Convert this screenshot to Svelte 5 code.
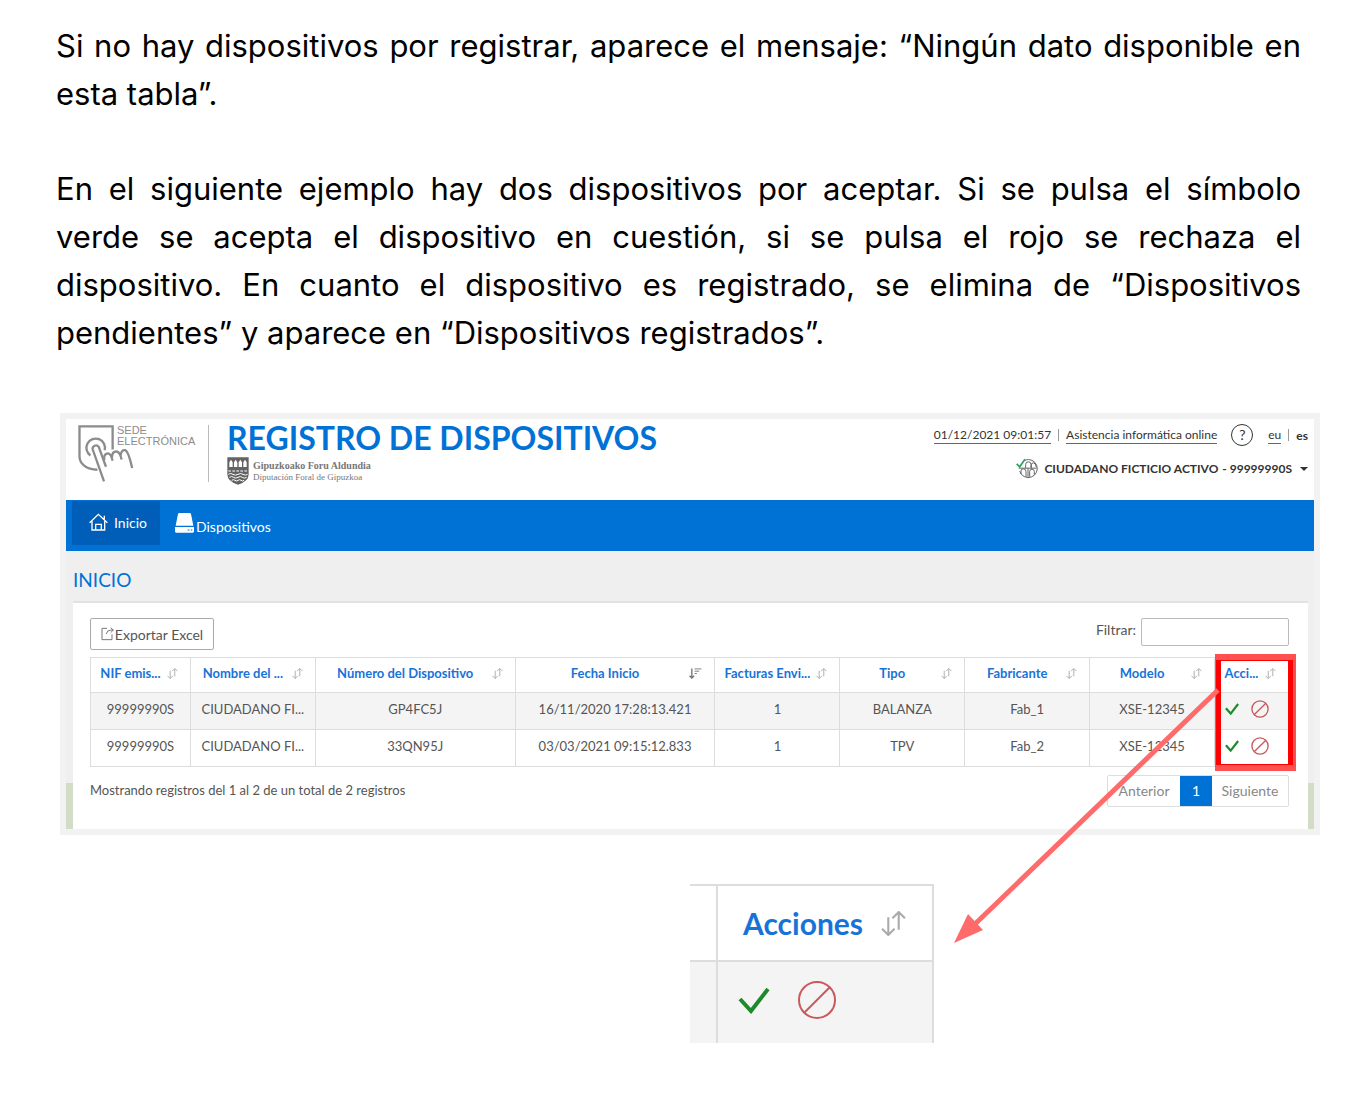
<script lang="ts">
    type Column = { label: string; width: number; sorted?: boolean };

    // Column widths are relative, they become percentages in the colgroup
    const columns: Column[] = [
        { label: 'NIF emis...', width: 100 },
        { label: 'Nombre del ...', width: 125 },
        { label: 'Número del Dispositivo', width: 200 },
        { label: 'Fecha Inicio', width: 200, sorted: true },
        { label: 'Facturas Envi...', width: 125 },
        { label: 'Tipo', width: 125 },
        { label: 'Fabricante', width: 125 },
        { label: 'Modelo', width: 125 },
        { label: 'Acci...', width: 74 }
    ];

    const total = columns.reduce((sum, column) => sum + column.width, 0);

    const devices = [
        ['99999990S', 'CIUDADANO FI...', 'GP4FC5J', '16/11/2020 17:28:13.421', '1', 'BALANZA', 'Fab_1', 'XSE-12345'],
        ['99999990S', 'CIUDADANO FI...', '33QN95J', '03/03/2021 09:15:12.833', '1', 'TPV', 'Fab_2', 'XSE-12345']
    ];

    let filter = $state('');

    const visible = $derived(
        devices.filter((row) => row.join(' ').toLowerCase().includes(filter.toLowerCase()))
    );
</script>

{#snippet sortIcon()}
    <svg class="sort" viewBox="0 0 24 24" aria-hidden="true">
        <path d="M7 6v17M1 17l6 6 6-6M17 18V2M11 7l6-6 6 6" />
    </svg>
{/snippet}

{#snippet sortedIcon()}
    <svg class="sort sorted" viewBox="0 0 28 24" aria-hidden="true">
        <path d="M6 1v21M1 17l5 5 5-5" stroke-width="3" />
        <path d="M12 2h15M12 7h10M12 12h5" />
    </svg>
{/snippet}

{#snippet actions()}
    <div class="actions">
        <button type="button" aria-label="Aceptar">
            <svg class="check" viewBox="0 0 32 27" aria-hidden="true"><path d="M2 12l11 12L30 2" /></svg>
        </button>
        <button type="button" aria-label="Rechazar">
            <svg class="ban" viewBox="0 0 40 40" aria-hidden="true">
                <circle cx="20" cy="20" r="18" />
                <path d="M7 33L33 7" />
            </svg>
        </button>
    </div>
{/snippet}

<main>
    <p>Si no hay dispositivos por registrar, aparece el mensaje: “Ningún dato disponible en esta tabla”.</p>
    <p>
        En el siguiente ejemplo hay dos dispositivos por aceptar. Si se pulsa el símbolo
        verde&nbsp;se&nbsp;acepta el dispositivo en cuestión, si se pulsa el rojo se rechaza el dispositivo. En
        cuanto el dispositivo es registrado, se elimina de “Dispositivos pendientes” y aparece en “Dispositivos
        registrados”.
    </p>

    <section class="screen">
        <header>
            <div class="sede">
                <svg class="hand" viewBox="0 0 168 172" aria-hidden="true">
                    <path d="M58 135C24 135 4 116 4 94V4H104V74" />
                    <path d="M37 92A28 28 0 1 1 80 76" />
                    <path d="M78 170L44 74A10 10 0 0 1 62 66L84 126" />
                    <path d="M79 106Q76 88 88 86Q98 84 104 108M102 98Q102 80 115 80Q126 80 131 104M128 92Q130 74 142 76Q152 80 163 130" />
                </svg>
                <div class="sede-name">
                    <span>SEDE</span>
                    <span>ELECTRÓNICA</span>
                </div>
            </div>
            <div class="brand">
                <h1>REGISTRO DE DISPOSITIVOS</h1>
                <div class="council">
                    <svg viewBox="0 0 66 84" aria-hidden="true">
                        <path d="M1 1H65V52Q65 74 33 83Q1 74 1 52Z" fill="#636363" />
                        <path d="M7 30V16l5-8 5 8v14zM21 30V16l5-8 5 8v14zM35 30V16l5-8 5 8v14zM49 30V16l5-8 5 8v14z" fill="#fff" />
                        <path d="M4 42H62" stroke="#fff" stroke-width="3" stroke-dasharray="8 4" />
                        <path d="M4 52q7-5 14 0t15 0t15 0t14 0M7 61q7-5 13 0t13 0t13 0t13 0M14 70q6-4 10 0t9 0t9 0t9 0" fill="none" stroke="#fff" stroke-width="3" />
                    </svg>
                    <div><b>Gipuzkoako Foru Aldundia</b><br />Diputación Foral de Gipuzkoa</div>
                </div>
            </div>
            <div class="session">
                <div class="links">
                    <a href="#hora">01/12/2021 09:01:57</a>
                    <i></i>
                    <a href="#asistencia">Asistencia informática online</a>
                    <a class="help" href="#ayuda" aria-label="Ayuda">?</a>
                    <a href="#eu">eu</a>
                    <i></i>
                    <b>es</b>
                </div>
                <button class="user" type="button">
                    <svg viewBox="0 0 66 62" aria-hidden="true">
                        <g fill="none" stroke="#666" stroke-width="3">
                            <path d="M27 6A27 27 0 1 1 11 39M8 30H62M36 30V60" />
                            <path d="M29 30V19q0-8 8-8t8 8v11M46 30V20q0-6 6-6 7 0 9 13M15 48V38q0-6 7-6t8 8v16M41 56V40q0-7 7-7t7 7v10" />
                        </g>
                        <path d="M2 17l9 9L27 3" fill="none" stroke="#2fa35c" stroke-width="5" />
                    </svg>
                    <span>CIUDADANO FICTICIO ACTIVO</span>
                    <span>- 99999990S</span>
                    <em></em>
                </button>
            </div>
        </header>

        <nav>
            <a class="active" href="#inicio">
                <svg width="19" height="18" viewBox="0 0 57 54" aria-hidden="true">
                    <path d="M2 29L28 4l27 25M9 25v26h38V25M20 51V34h17v17M46 19V8" fill="none" stroke="#fff" stroke-width="4" />
                </svg>
                Inicio
            </a>
            <a class="devices" href="#dispositivos">
                <svg width="19" height="20" viewBox="0 0 57 60" aria-hidden="true">
                    <path d="M9 3Q10 0 13 0H44Q47 0 48 3L55 38H2Z" fill="#fff" />
                    <path d="M0 42H57V55Q57 59 53 59H4Q0 59 0 55Z" fill="#fff" />
                    <path d="M38 51h5M47 51h5" stroke="#0072d6" stroke-width="3" />
                </svg>
                Dispositivos
            </a>
        </nav>

        <div class="content">
            <h2>INICIO</h2>
            <div class="card">
                <div class="toolbar">
                    <button class="export" type="button">
                        <svg width="14" height="14" viewBox="0 0 42 42" aria-hidden="true">
                            <path d="M18 4H3V38H33V22M16 21Q18 9 30 9H37M29 2l8 7-8 8" fill="none" stroke="#777" stroke-width="3" />
                        </svg>Exportar Excel
                    </button>
                    <div class="search">
                        <label for="filter">Filtrar:</label>
                        <input id="filter" type="text" bind:value={filter} />
                    </div>
                </div>

                <div class="table-wrap">
                    <table>
                        <colgroup>
                            {#each columns as column}
                                <col style="width: {(column.width / total) * 100}%" />
                            {/each}
                        </colgroup>
                        <thead>
                            <tr>
                                {#each columns as column}
                                    <th>
                                        {column.label}
                                        {#if column.sorted}
                                            {@render sortedIcon()}
                                        {:else}
                                            {@render sortIcon()}
                                        {/if}
                                    </th>
                                {/each}
                            </tr>
                        </thead>
                        <tbody>
                            {#each visible as row}
                                <tr>
                                    {#each row as cell}
                                        <td>{cell}</td>
                                    {/each}
                                    <td>{@render actions()}</td>
                                </tr>
                            {/each}
                        </tbody>
                    </table>
                    <div class="highlight"></div>
                    <svg class="arrow" width="266" height="288" viewBox="0 0 266 288" aria-hidden="true">
                        <path d="M264 33L20 268" stroke="#ff6b6b" stroke-width="5" />
                        <path d="M0 286L14 257L29 273Z" fill="#ff6b6b" />
                    </svg>
                </div>

                <div class="footer">
                    <span>Mostrando registros del 1 al 2 de un total de 2 registros</span>
                    <div class="pages">
                        <button type="button">Anterior</button>
                        <button class="current" type="button">1</button>
                        <button type="button">Siguiente</button>
                    </div>
                </div>
            </div>
        </div>
    </section>

    <table class="detail">
        <thead>
            <tr>
                <td></td>
                <th>Acciones {@render sortIcon()}</th>
            </tr>
        </thead>
        <tbody>
            <tr>
                <td></td>
                <td>{@render actions()}</td>
            </tr>
        </tbody>
    </table>
</main>

<style>
    :global(body) {
        margin: 0;
        background: #fff;
    }

    main {
        padding: 22px 0 50px;
        font-family: Lato, sans-serif;
        font-size: 14px;
        color: #555;
    }

    p {
        margin: 0 62px 47px 56px;
        font-family: Inter, sans-serif;
        font-size: 31px;
        line-height: 48px;
        text-align: justify;
        color: #000;
    }

    a {
        color: inherit;
        text-decoration: none;
    }

    button {
        font: inherit;
        color: inherit;
        padding: 0;
        border: 0;
        background: none;
        cursor: pointer;
    }

    .screen {
        margin: 56px 43px 0 60px;
        border: 6px solid #f2f2f2;
        background: #fff;
    }

    header {
        display: flex;
        height: 81px;
        box-sizing: border-box;
        padding: 0 6px 0 12px;
    }

    .sede {
        display: flex;
        height: 57px;
        width: 130px;
        margin-top: 6px;
        border-right: 1px solid #bbb;
        font: 500 11px/11px "Liberation Sans", sans-serif;
        color: #8c8c8c;
    }

    .sede-name {
        display: flex;
        flex-direction: column;
        margin-left: -17px;
    }

    .hand {
        width: 56px;
        height: 57px;
        flex: none;
    }

    .hand path {
        fill: none;
        stroke: #8c8c8c;
        stroke-width: 7;
    }

    .brand {
        margin-left: 18px;
    }

    h1 {
        margin: 0;
        font-size: 32px;
        line-height: 38px;
        color: #0072d6;
        white-space: nowrap;
    }

    .council {
        display: flex;
        gap: 4px;
        font: 9px/11px "Liberation Serif", serif;
        color: #777;
        white-space: nowrap;
    }

    .council b {
        font-size: 10px;
    }

    .council svg {
        width: 22px;
        height: 28px;
    }

    .council div {
        padding-top: 3px;
    }

    .session {
        display: flex;
        flex-direction: column;
        align-items: flex-end;
        margin-left: auto;
        padding-top: 5px;
        gap: 12px;
        font-size: 12px;
        color: #333;
    }

    .links {
        display: flex;
        align-items: center;
        gap: 7px;
    }

    .links a {
        line-height: 17px;
        border-bottom: 1px solid #666;
    }

    .links i {
        height: 12px;
        border-left: 1px solid #999;
    }

    .links .help {
        margin: 0 8px 0 7px;
        width: 20px;
        border: 1px solid #333;
        border-radius: 50%;
        line-height: 20px;
        font-size: 14px;
        text-align: center;
    }

    .user {
        display: flex;
        align-items: center;
        gap: 4px;
        font-weight: bold;
    }

    .user svg {
        width: 22px;
        height: 21px;
        margin-right: 2px;
    }

    .user em {
        margin-left: 4px;
        border: 4px solid transparent;
        border-top-color: #333;
        border-bottom: 0;
    }

    nav {
        display: flex;
        height: 51px;
        box-sizing: border-box;
        padding: 1px 6px 6px;
        background: #0072d6;
        color: #fff;
    }

    nav a {
        display: flex;
        align-items: center;
        gap: 6px;
        width: 88px;
        box-sizing: border-box;
        padding: 0 0 2px 17px;
    }

    .active {
        background: #005eb8;
    }

    .devices {
        width: auto;
        padding: 0 0 10px 15px;
        gap: 2px;
        align-items: flex-end;
    }

    .devices svg {
        margin-bottom: 2px;
    }

    .content {
        padding: 0 6px 0 7px;
        background: linear-gradient(#efefef 232px, #d3dcc6 232px);
    }

    h2 {
        margin: 0;
        padding: 17px 0 9px;
        font-size: 19px;
        font-weight: normal;
        line-height: 24px;
        color: #0072d6;
    }

    .card {
        box-sizing: border-box;
        padding: 15px 19px 22px 17px;
        border-top: 2px solid #e2e2e2;
        background: #fff;
    }

    .toolbar {
        display: flex;
        justify-content: space-between;
        align-items: flex-start;
        height: 39px;
    }

    .export {
        width: 124px;
        height: 32px;
        border: 1px solid #aaa;
        border-radius: 2px;
        white-space: nowrap;
    }

    .export svg {
        vertical-align: -1px;
    }

    .search {
        display: flex;
        gap: 5px;
        line-height: 24px;
    }

    input {
        width: 148px;
        height: 28px;
        box-sizing: border-box;
        border: 1px solid #bbb;
        border-radius: 2px;
        font: inherit;
    }

    .table-wrap {
        position: relative;
    }

    table {
        border-collapse: collapse;
        table-layout: fixed;
        text-align: center;
    }

    .table-wrap table {
        width: 100%;
        font-size: 13px;
    }

    th,
    td {
        border: 1px solid #ddd;
        padding: 0 0 5px;
        white-space: nowrap;
    }

    th {
        position: relative;
        height: 29px;
        padding: 0 27px 5px 7px;
        color: #1873d8;
    }

    td {
        height: 31px;
    }

    tbody tr:nth-child(odd) {
        background: #f4f4f4;
    }

    .sort {
        position: absolute;
        right: 12px;
        top: 10px;
        width: 11px;
        height: 11px;
        fill: none;
        stroke: #aaa;
        stroke-width: 2;
    }

    .sorted {
        width: 13px;
        stroke: #777;
    }

    .actions {
        display: flex;
        align-items: center;
        gap: 12px;
        padding-left: 10px;
    }

    .actions button {
        display: flex;
    }

    .check {
        width: 14px;
        height: 12px;
        fill: none;
        stroke: #1f8a2c;
        stroke-width: 5;
    }

    .ban {
        width: 18px;
        height: 18px;
        fill: none;
        stroke: #c9595c;
        stroke-width: 3;
    }

    .highlight {
        position: absolute;
        top: -3px;
        right: -7px;
        width: 77px;
        height: 105px;
        border: 6px solid #ff4f4f;
        border-left-width: 1px;
        border-right-width: 3px;
        box-shadow: inset 5px 0 #f00, inset -5px 0 #f00, inset 0 1px #f00, inset 0 -1px #f00;
    }

    .arrow {
        position: absolute;
        top: 0;
        right: 69px;
    }

    .footer {
        display: flex;
        justify-content: space-between;
        padding-top: 8px;
        line-height: 30px;
        font-size: 13px;
    }

    .pages {
        display: flex;
        border: 1px solid #ddd;
        border-radius: 2px;
        font-size: 14px;
        color: #888;
    }

    .pages button {
        width: 76px;
        height: 30px;
    }

    .pages button:first-child {
        width: 72px;
    }

    .pages .current {
        width: 32px;
        background: #0072d6;
        color: #fff;
    }

    .detail {
        width: 244px;
        margin: 49px 429px 0 auto;
        font-size: 30px;
    }

    .detail td,
    .detail th {
        border-width: 2px;
    }

    .detail td:first-child {
        width: 26px;
        border-left: 0;
    }

    .detail th {
        height: 74px;
        padding: 0 44px 0 0;
    }

    .detail tbody td {
        height: 76px;
        border-bottom: 0;
    }

    .detail .sort {
        right: 26px;
        top: 25px;
        width: 25px;
        height: 25px;
    }

    .detail .actions {
        gap: 27px;
        padding-left: 20px;
    }

    .detail .check {
        width: 32px;
        height: 27px;
        stroke-width: 4;
    }

    .detail .ban {
        width: 40px;
        height: 40px;
        stroke-width: 2;
    }
</style>
